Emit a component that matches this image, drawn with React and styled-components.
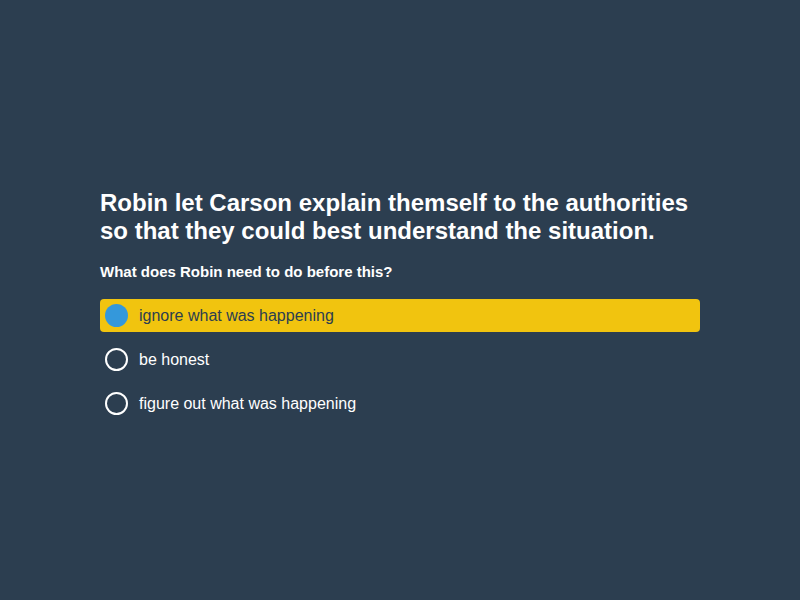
import React, { useState } from 'react';
import styled, { createGlobalStyle } from 'styled-components';

const GlobalStyle = createGlobalStyle`
  html, body {
    margin: 0;
    padding: 0;
    background: #2c3e50;
  }
  body {
    font-family: 'Liberation Sans', Arial, sans-serif;
  }
`;

const Page = styled.div`
  box-sizing: border-box;
  width: 800px;
  height: 600px;
  padding-top: 189px;
  display: flex;
  justify-content: center;
  background: #2c3e50;
`;

const Card = styled.div`
  width: 600px;
  color: #fff;
`;

const Title = styled.h1`
  margin: 0 0 17px;
  font-size: 24px;
  line-height: 28px;
  font-weight: 700;
`;

const Question = styled.h2`
  margin: 0 0 17px;
  font-size: 15px;
  line-height: 20px;
  font-weight: 700;
`;

const OptionList = styled.ul`
  list-style: none;
  margin: 0;
  padding: 0;
  display: flex;
  flex-direction: column;
  gap: 11px;
`;

const Option = styled.li`
  display: flex;
  align-items: center;
  gap: 11px;
  height: 33px;
  padding: 0 5px;
  border-radius: 4px;
  cursor: pointer;
  font-size: 16px;
  background: ${({ selected }) => (selected ? '#f1c40f' : 'transparent')};
  color: ${({ selected }) => (selected ? '#2c3e50' : '#fff')};
`;

const Radio = styled.span`
  box-sizing: border-box;
  width: 23px;
  height: 23px;
  border-radius: 50%;
  flex-shrink: 0;
  border: ${({ selected }) => (selected ? 'none' : '2px solid #fff')};
  background: ${({ selected }) => (selected ? '#3498db' : 'transparent')};
`;

const options = [
  'ignore what was happening',
  'be honest',
  'figure out what was happening',
];

const App = () => {
  const [selected, setSelected] = useState(0);

  return (
    <Page>
      <GlobalStyle />
      <Card>
        <Title>
          Robin let Carson explain themself to the authorities so that they could best understand the situation.
        </Title>
        <Question>What does Robin need to do before this?</Question>
        <OptionList>
          {options.map((text, i) => (
            <Option key={text} selected={i === selected} onClick={() => setSelected(i)}>
              <Radio selected={i === selected} />
              {text}
            </Option>
          ))}
        </OptionList>
      </Card>
    </Page>
  );
};

export default App;
